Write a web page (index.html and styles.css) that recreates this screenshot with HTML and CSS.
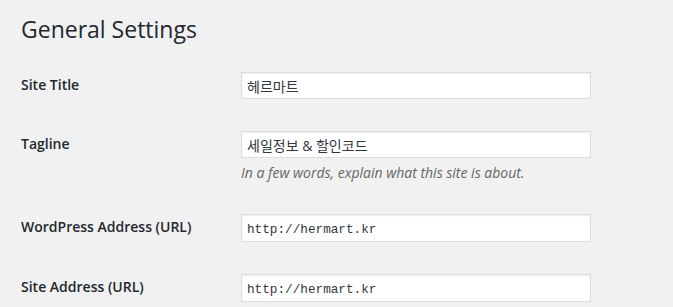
FILE: index.html
```html
<!DOCTYPE html>
<html lang="ko">
<head>
    <meta charset="UTF-8">
    <meta name="viewport" content="width=device-width, initial-scale=1.0">
    <title>General Settings</title>
    <link rel="stylesheet" href="styles.css">
</head>
<body>
    <div class="wrap">
        <h1>General Settings</h1>

        <form class="form-table">
            <div class="row">
                <label class="row-label" for="blogname">Site Title</label>
                <div class="row-field">
                    <input class="regular-text" id="blogname" type="text" value="헤르마트">
                </div>
            </div>

            <div class="row">
                <label class="row-label" for="blogdescription">Tagline</label>
                <div class="row-field">
                    <input class="regular-text" id="blogdescription" type="text" value="세일정보 &amp; 할인코드">
                    <p class="description">In a few words, explain what this site is about.</p>
                </div>
            </div>

            <div class="row">
                <label class="row-label" for="siteurl">WordPress Address (URL)</label>
                <div class="row-field">
                    <input class="regular-text code" id="siteurl" type="url" value="http://hermart.kr">
                </div>
            </div>

            <div class="row">
                <label class="row-label" for="home">Site Address (URL)</label>
                <div class="row-field">
                    <input class="regular-text code" id="home" type="url" value="http://hermart.kr">
                </div>
            </div>
        </form>
    </div>
</body>
</html>
```

FILE: styles.css
```css
/* Global */
* {
    box-sizing: border-box;
}

body {
    margin: 0;
    background-color: #f1f1f1;
    color: #23282d;
    font-family: "Open Sans", "Noto Sans CJK KR", sans-serif;
    font-size: 14px;
    overflow: hidden;
}

.wrap {
    padding: 1px 20px 0 21px;
}

h1 {
    margin: 0;
    padding: 14px 0 5px;
    font-size: 23px;
    font-weight: 400;
    line-height: 29px;
}

/* Settings rows */
.form-table {
    margin-top: 7px;
}

.row {
    display: grid;
    grid-template-columns: 220px 1fr;
}

.row-label {
    padding: 20px 0;
    font-weight: 600;
    line-height: 18.2px;
}

.row-field {
    padding: 15px 0;
}

/* Inputs */
.regular-text {
    display: block;
    width: 350px;
    height: 27px;
    margin: 1px 0;
    padding: 0 5px;
    background-color: #fff;
    border: 1px solid #ddd;
    box-shadow: inset 0 1px 2px rgba(0, 0, 0, 0.07);
    color: #32373c;
    font-family: "Open Sans", "Noto Sans CJK KR", sans-serif;
    font-size: 14px;
    outline: none;
}

.regular-text.code {
    height: 28px;
    padding-top: 2px;
    font-family: "Liberation Mono", monospace;
    font-size: 12.7px;
}

.description {
    margin: 4px 0 0;
    color: #666;
    font-size: 14px;
    font-style: italic;
    line-height: 21px;
}
```
